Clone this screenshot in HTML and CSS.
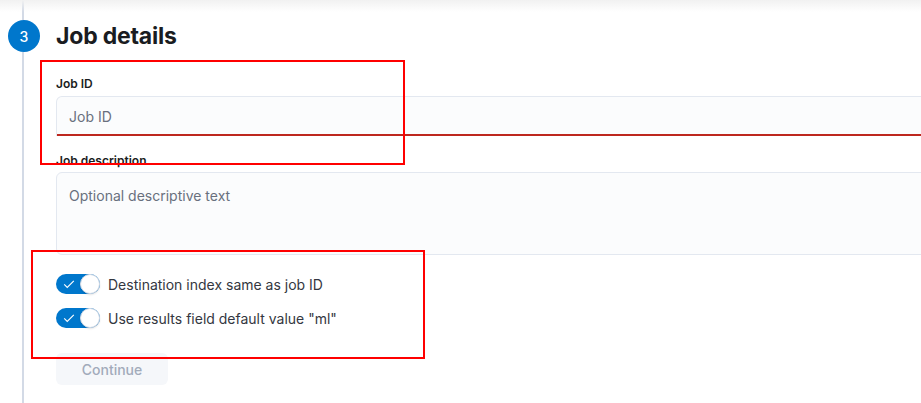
FILE: index.html
```html
<!DOCTYPE html>
<html>
<head>
<meta charset="utf-8">
<link rel="stylesheet" href="styles.css">
</head>
<body>
<div class="topshade"></div>
<div class="step">
  <div class="rail">
    <div class="line short"></div>
    <div class="num">3</div>
    <div class="line grow"></div>
  </div>
  <div class="content">
    <h2 class="title">Job details</h2>
    <div class="row">
      <label class="label">Job ID</label>
      <div class="input invalid">Job ID</div>
    </div>
    <div class="row second">
      <label class="label">Job description</label>
      <div class="input area">Optional descriptive text</div>
    </div>
    <div class="switches">
      <div class="switch">
        <span class="track"><svg class="check" width="14" height="14" viewBox="0 0 16 16"><path d="M2.5 8.5l3.5 3.5 7.5-7.5" fill="none" stroke="#fff" stroke-width="1.3"/></svg><span class="thumb"></span></span>
        <span class="swlabel">Destination index same as job ID</span>
      </div>
      <div class="switch">
        <span class="track"><svg class="check" width="14" height="14" viewBox="0 0 16 16"><path d="M2.5 8.5l3.5 3.5 7.5-7.5" fill="none" stroke="#fff" stroke-width="1.3"/></svg><span class="thumb"></span></span>
        <span class="swlabel">Use results field default value "ml"</span>
      </div>
    </div>
    <button class="btn">Continue</button>
  </div>
</div>
<div class="mark mark1"></div>
<div class="mark mark2"></div>
</body>
</html>
```

FILE: styles.css
```css
html, body {
  margin: 0;
  padding: 0;
  height: 403px;
  overflow: hidden;
  background: #fff;
  font-family: Inter, "Noto Sans", sans-serif;
  color: #1a1c21;
}
body { position: relative; }
.topshade {
  position: absolute;
  left: 0; right: 0; top: 0;
  height: 12px;
  background: linear-gradient(#f1f1f1, rgba(255,255,255,0));
}
.step {
  display: flex;
  gap: 16px;
  padding-left: 8px;
  height: 403px;
}
.rail {
  width: 32px;
  display: flex;
  flex-direction: column;
  align-items: center;
  flex-shrink: 0;
}
.line {
  width: 2px;
  background: #d3dae6;
  margin-left: -2px;
}
.line.short { height: 20px; }
.line.grow { flex: 1; }
.num {
  width: 32px;
  height: 32px;
  border-radius: 50%;
  background: #0077cc;
  color: #fff;
  font-size: 14px;
  font-weight: 500;
  display: flex;
  align-items: center;
  justify-content: center;
}
.content {
  padding-top: 20px;
  width: 900px;
  flex-shrink: 0;
}
.title {
  margin: 0;
  font-size: 23px;
  font-weight: 700;
  line-height: 33px;
  letter-spacing: -0.2px;
}
.row {
  margin-top: 23px;
  display: flex;
  flex-direction: column;
}
.row.second { margin-top: 17px; }
.label {
  font-size: 12px;
  font-weight: 600;
  line-height: 16px;
  margin-bottom: 4px;
}
.row.second .label { margin-bottom: 3px; }
.input {
  height: 40px;
  box-sizing: border-box;
  border: 1px solid #e3e8f0;
  border-radius: 6px;
  background: #fbfcfd;
  padding: 0 12px;
  font-size: 14px;
  line-height: 40px;
  color: #69707d;
}
.input.invalid {
  border-bottom: none;
  border-bottom-left-radius: 0;
  border-bottom-right-radius: 0;
  box-shadow: inset 0 -2px 0 #bd271e;
}
.input.area {
  height: 83px;
  line-height: 20px;
  padding-top: 13px;
}
.switches {
  margin-top: 19px;
  display: flex;
  flex-direction: column;
  gap: 14px;
}
.switch {
  display: flex;
  align-items: center;
  gap: 8px;
  height: 20px;
}
.track {
  position: relative;
  width: 44px;
  height: 20px;
  border-radius: 10px;
  background: #0077cc;
  flex-shrink: 0;
}
.check {
  position: absolute;
  left: 6px;
  top: 3px;
}
.thumb {
  position: absolute;
  right: 0;
  top: 0;
  width: 20px;
  height: 20px;
  box-sizing: border-box;
  border-radius: 50%;
  background: #fff;
  border: 1px solid #d3dae6;
  box-shadow: 0 1px 2px rgba(0,0,0,0.12);
}
.swlabel {
  font-size: 14px;
  color: #343741;
}
.btn {
  margin-top: 25px;
  width: 112px;
  height: 32px;
  border: none;
  border-radius: 6px;
  background: #f5f7fa;
  color: #a2abba;
  font-family: inherit;
  font-size: 14px;
  font-weight: 500;
  display: block;
}
.mark {
  position: absolute;
  border: 2px solid #ff0000;
  box-sizing: border-box;
  pointer-events: none;
}
.mark1 { left: 40px; top: 60px; width: 365px; height: 105px; }
.mark2 { left: 31px; top: 250px; width: 394px; height: 109px; }
```
